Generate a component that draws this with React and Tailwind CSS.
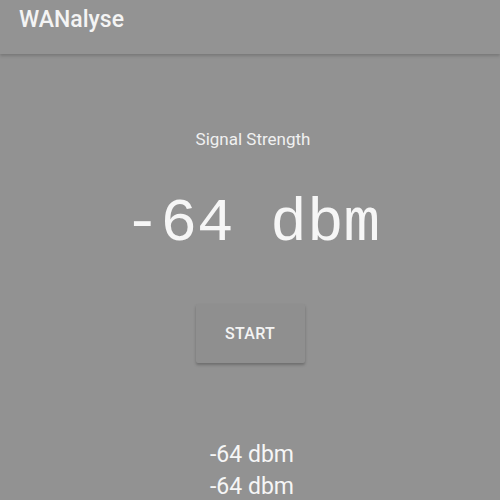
export default function App() {
  return (
    <div className="w-[500px] h-[500px] bg-[#929292] overflow-hidden flex flex-col" style={{ fontFamily: "Roboto, 'Noto Sans', sans-serif" }}>
      <div className="h-[54px] shrink-0 bg-[#939393] flex items-start pt-[5px] pl-[19px] shadow-[0_2px_3px_rgba(0,0,0,0.18)] relative z-10">
        <span className="text-[23px] leading-[30px] font-medium text-[#f4f4f4]">WANalyse</span>
      </div>
      <div className="flex flex-col items-center">
        <div className="mt-[74px] text-[17px] text-[#f0f0f0] leading-[22px] pl-[6px]">Signal Strength</div>
        <div className="mt-[38px] text-[61px] leading-[72px] text-[#f6f6f6] pl-[4px]" style={{ fontFamily: "'Courier New', 'Liberation Mono', monospace" }}>-64 dbm</div>
        <button className="mt-[44px] w-[109px] h-[59px] bg-[#8f8f8f] rounded-[2px] shadow-[0_2px_3px_rgba(0,0,0,0.25)] text-[16px] font-medium text-[#f4f4f4] tracking-[0.3px]">START</button>
        <div className="mt-[76px] text-[23px] leading-[32px] text-[#f6f6f6] text-center pl-[4px]">
          <div>-64 dbm</div>
          <div>-64 dbm</div>
        </div>
      </div>
    </div>
  );
}
